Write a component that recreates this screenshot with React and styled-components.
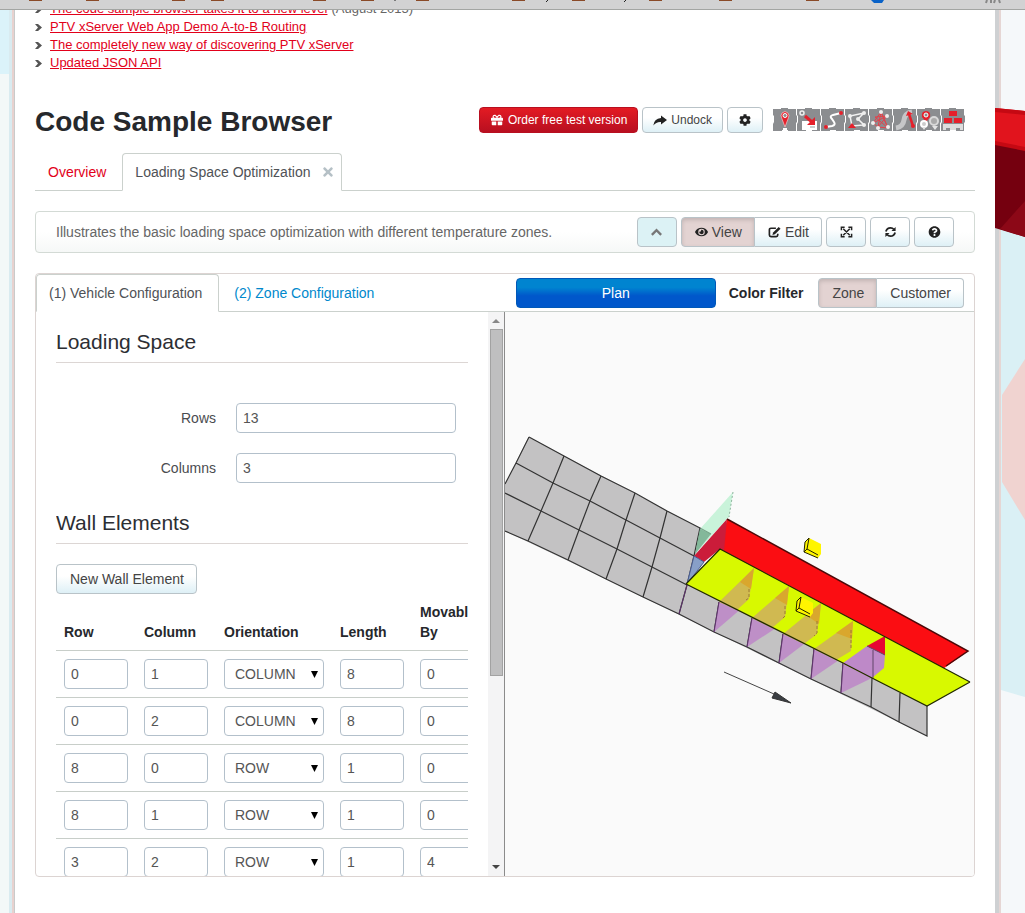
import { useState } from "react";
import styled, { createGlobalStyle, css } from "styled-components";
import { FaGift, FaCog, FaEye, FaQuestionCircle, FaTimes } from "react-icons/fa";

const news = [
  { title: "The code sample browser takes it to a new level", date: "(August 2015)" },
  { title: "PTV xServer Web App Demo A-to-B Routing" },
  { title: "The completely new way of discovering PTV xServer" },
  { title: "Updated JSON API" },
];

const walls = [
  { row: 0, column: 1, orientation: "COLUMN", length: 8, movable: 0 },
  { row: 0, column: 2, orientation: "COLUMN", length: 8, movable: 0 },
  { row: 8, column: 0, orientation: "ROW", length: 1, movable: 0 },
  { row: 8, column: 1, orientation: "ROW", length: 1, movable: 0 },
  { row: 3, column: 2, orientation: "ROW", length: 1, movable: 4 },
];

export default function App() {
  return (
    <>
      <GlobalStyle />
      <Page>
        <BookmarkBar />
        <Body>
          <LeftGutter />
          <Main>
            <News />
            <Header />
            <MainTabs />
            <Description />
            <Sample />
          </Main>
          <RightGutter />
        </Body>
      </Page>
    </>
  );
}

function BookmarkBar() {
  const folders = [29, 86, 172, 211, 313, 361, 416, 512, 572, 649, 719, 806];
  return (
    <Bar>
      <svg width="1025" height="9" aria-hidden="true">
        {folders.map((x) => (
          <rect key={x} x={x} y="0" width="13" height="1" fill="#8a4a28" />
        ))}
        <path d="M395 0v1M548 0l-2 2M626 0l-2 2" stroke="#222" />
        <path d="M871 0h13l-2 3h-8z" fill="#0a62c8" />
        <path d="M987 0l-1 3M991 0v3M995 0l-1 3M999 0l1 3" stroke="#888" strokeWidth="2" />
      </svg>
    </Bar>
  );
}

function News() {
  return (
    <NewsBox>
      <NewsList>
        {news.map((n) => (
          <li key={n.title}>
            <svg viewBox="0 0 8 9" aria-hidden="true">
              <path d="M0 1h3l4 3.5L3 8H0l3-3.5z" fill="#555" />
            </svg>
            <a href="#news">{n.title}</a> {n.date}
          </li>
        ))}
      </NewsList>
    </NewsBox>
  );
}

/* toolbar icons that sit on a 14px grid */
const shapes = {
  share: <path d="M8 1.5L14 6 8 10.500V8Q3.500 7.500.3 11.500 1 4.500 8 4z" />,
  up: <path d="M2 9l5-5 5 5" fill="none" stroke="currentColor" strokeWidth="2.6" />,
  edit: (
    <>
      <path
        d="M8.500 2H3.200Q1.500 2 1.500 3.700v5.600Q1.500 11 3.200 11h5.600q1.700 0 1.700-1.700V8"
        fill="none"
        stroke="currentColor"
        strokeWidth="1.8"
      />
      <path d="M11.500.5L13.500 2.500 7.500 8.500 4.800 9.200 5.500 6.500z" />
    </>
  ),
  full: (
    <path
      d="M1.500 4V.8h3.500M9 .8h3.500V4M12.500 8v3.200H9M5 11.200H1.500V8M3.500 2.500l7 7M10.500 2.500l-7 7"
      fill="none"
      stroke="currentColor"
      strokeWidth="1.6"
    />
  ),
  reload: (
    <>
      <path
        d="M2 5.500Q3.200 1.500 7 1.500q2.200 0 3.800 1.800M12 6.500Q10.800 10.500 7 10.500q-2.200 0-3.800-1.800"
        fill="none"
        stroke="currentColor"
        strokeWidth="1.9"
      />
      <path d="M12.500.5V5H8zM1.500 11.500V7H6z" />
    </>
  ),
};

function Icon({ name }) {
  return (
    <svg viewBox="0 0 14 12" fill="currentColor" aria-hidden="true">
      {shapes[name]}
    </svg>
  );
}

function Header() {
  return (
    <HeaderRow>
      <h1>Code Sample Browser</h1>
      <Button $small $kind="danger">
        <FaGift />
        Order free test version
      </Button>
      <Button $small>
        <Icon name="share" />
        Undock
      </Button>
      <Button $small aria-label="Settings">
        <FaCog />
      </Button>
      <ProductIcons />
    </HeaderRow>
  );
}

function ProductIcons() {
  return (
    <Products>
      <Tile label="xLocate">
        <path d="M12 19L9 11Q7 7 9 5q3-3 6 0 2 2 0 6z" fill="#e5202b" stroke="#f6c6c8" strokeWidth=".7" />
        <circle cx="12" cy="7.500" r="2" fill="#8b8d90" stroke="#fff" />
        <path d="M10 21h4" stroke="#fff" strokeWidth="2" />
      </Tile>
      <Tile label="xMap">
        <path d="M5 13h15v9H5z" fill="#fff" />
        <path d="M8 8l7 6" stroke="#e5202b" strokeWidth="3" />
        <path d="M18 9v8h-8z" fill="#e5202b" />
        <circle cx="5" cy="5" r="2" fill="none" stroke="#eee" strokeWidth="1.500" />
        <path d="M13 19h5" stroke="#999" />
      </Tile>
      <Tile label="xRoute">
        <path d="M20 5l-8 2q-4 1-1 4l2 3q2 3-2 4l-6 1" fill="none" stroke="#fff" strokeWidth="2" />
        <circle cx="20" cy="5" r="2" fill="#e5202b" />
        <circle cx="5" cy="19" r="2" fill="#e5202b" />
      </Tile>
      <Tile label="xTour">
        <path d="M19 5L5 8l2 10 12-1-6-6 6-6" fill="none" stroke="#f2f2f2" strokeWidth="1.500" />
        <circle cx="19" cy="5" r="2" fill="#eee" />
        <circle cx="5" cy="8" r="2" fill="#eee" />
        <circle cx="13" cy="11" r="2" fill="#eee" />
        <circle cx="19" cy="17" r="2" fill="#eee" />
        <path d="M3 20l4-5 4 5z" fill="#e5202b" />
      </Tile>
      <Tile label="xDima">
        <path
          d="M12 4L4 15l5 4 10 1zM12 4l7 16M6 9l13 11M18 8L4 15M12 4L9 19M18 8L9 19M6 9l12-1"
          fill="none"
          stroke="#e5404a"
        />
        <circle cx="12" cy="4" r="2" fill="#eee" />
        <circle cx="4" cy="15" r="2" fill="#eee" />
        <circle cx="9" cy="20" r="2" fill="#eee" />
        <circle cx="19" cy="19" r="2" fill="#eee" />
        <circle cx="18" cy="8" r="2" fill="#eee" />
      </Tile>
      <Tile label="xTraffic">
        <path d="M3 20q7-1 8-8t8-8" fill="none" stroke="#c5c6c8" strokeWidth="5" />
        <path d="M16 6l4 12" stroke="#e5202b" strokeWidth="2.500" />
        <path d="M13 8l2-5 5 3z" fill="#e5202b" />
        <circle cx="20" cy="18" r="2" fill="#e5202b" />
      </Tile>
      <Tile label="xCluster">
        <path d="M9 14L5 9q-1-6 4-6t4 6z" fill="#e5202b" />
        <circle cx="9" cy="7" r="2" fill="#8b8d90" stroke="#fff" />
        <circle cx="17" cy="13" r="4" fill="#aaa" stroke="#d9d9d9" strokeWidth="2" />
        <circle cx="7" cy="16" r="3" fill="#ccc" stroke="#fff" strokeWidth="2" />
        <path d="M15 18l3 4 3-4zM5 19l2 3 2-3z" fill="#e4e4e4" />
      </Tile>
      <Tile label="xLoad">
        <path d="M8 3h8v5H8zM3 10h8v5H3zM13 10h8v5h-8z" fill="#e5202b" />
        <path d="M2 16h20v6h-3v-2h-4v2H9v-2H5v2H2z" fill="#ddd" />
      </Tile>
    </Products>
  );
}

function Tile({ label, children }) {
  return (
    <svg width="24" height="24" viewBox="0 0 24 24" role="img" aria-label={label}>
      <path
        d="M0 1h8V0h7v1h8v6l1 1v6l-1 1v8h-8v-1H9v1H0v-7l1-2V8L0 7z"
        fill="#8b8d90"
      />
      {children}
    </svg>
  );
}

function MainTabs() {
  return (
    <Tabs>
      <Tab href="#overview" $color="#e2001a">
        Overview
      </Tab>
      <Tab href="#loading" $active>
        Loading Space Optimization
        <FaTimes />
      </Tab>
    </Tabs>
  );
}

function Description() {
  return (
    <Well>
      <p>Illustrates the basic loading space optimization with different temperature zones.</p>
      <Button $kind="muted" $square aria-label="Collapse">
        <Icon name="up" />
      </Button>
      <Group>
        <Button $kind="active">
          <FaEye />
          View
        </Button>
        <Button>
          <Icon name="edit" />
          Edit
        </Button>
      </Group>
      <Button $square aria-label="Full screen">
        <Icon name="full" />
      </Button>
      <Button $square aria-label="Reload">
        <Icon name="reload" />
      </Button>
      <Button $square aria-label="Help">
        <FaQuestionCircle />
      </Button>
    </Well>
  );
}

function Sample() {
  const [filter, setFilter] = useState("Zone");
  return (
    <Panel>
      <PanelBar>
        <Tab href="#vehicle" $active>
          (1) Vehicle Configuration
        </Tab>
        <Tab href="#zones" $color="#0088cc">
          (2) Zone Configuration
        </Tab>
        <Tools>
          <PlanButton>Plan</PlanButton>
          <strong>Color Filter</strong>
          <Group>
            {["Zone", "Customer"].map((f) => (
              <Button key={f} $kind={filter === f ? "active" : undefined} onClick={() => setFilter(f)}>
                {f}
              </Button>
            ))}
          </Group>
        </Tools>
      </PanelBar>
      <Split>
        <Vehicle />
        <ScrollBar>
          <Arrow $up />
          <Thumb />
          <Arrow />
        </ScrollBar>
        <Scene />
      </Split>
    </Panel>
  );
}

function Vehicle() {
  return (
    <Config>
      <Legend>Loading Space</Legend>
      <Fields>
        <Field>
          <label htmlFor="rows">Rows</label>
          <Input id="rows" defaultValue="13" />
        </Field>
        <Field>
          <label htmlFor="columns">Columns</label>
          <Input id="columns" defaultValue="3" />
        </Field>
      </Fields>
      <Legend>Wall Elements</Legend>
      <NewButton>New Wall Element</NewButton>
      <WallTable>
        <thead>
          <tr>
            <th>Row</th>
            <th>Column</th>
            <th>Orientation</th>
            <th>Length</th>
            <th>
              Movable
              <br />
              By
            </th>
          </tr>
        </thead>
        <tbody>
          {walls.map((w, i) => (
            <tr key={i}>
              <td>
                <Input $narrow aria-label="Row" defaultValue={w.row} />
              </td>
              <td>
                <Input $narrow aria-label="Column" defaultValue={w.column} />
              </td>
              <td>
                <SelectBox>
                  <select aria-label="Orientation" defaultValue={w.orientation}>
                    <option>COLUMN</option>
                    <option>ROW</option>
                  </select>
                  <svg width="7" height="7" aria-hidden="true">
                    <path d="M0 0h7L3.5 7z" />
                  </svg>
                </SelectBox>
              </td>
              <td>
                <Input $narrow aria-label="Length" defaultValue={w.length} />
              </td>
              <td>
                <Input $narrow aria-label="Movable By" defaultValue={w.movable} />
              </td>
            </tr>
          ))}
        </tbody>
      </WallTable>
    </Config>
  );
}

function Scene() {
  return (
    <Canvas viewBox="505 312 469 564" preserveAspectRatio="xMinYMin slice" aria-label="Loading space">
      {/* floor */}
      <path
        d="M529 437L711 534L694 556L687 584L927 706V736L714 632L606 579L505 531V484z"
        fill="#c3c2c3"
      />
      <g fill="none" stroke="#333" strokeWidth="1.2">
        <path d="M529 437L564 456L601 476L635 493L667 511L700 528L711 534" />
        <path d="M505 484L516 463L529 437M516 463L553 483L590 501L626 520L660 538L694 556" />
        <path d="M505 493L541 511L579 530L617 549L652 567L687 585" />
        <path d="M505 531L528 541L568 560L606 579L643 597L679 614L714 632L747 647L779 663L811 679L841 693L871 707L899 722L927 736V706" />
        <path d="M564 456L553 483L541 511L528 541M601 476L590 501L579 530L568 560" />
        <path d="M635 493L626 520L617 549L606 579M667 511L660 538L652 567L643 597" />
        <path d="M700 528L694 556L687 585L679 614M719 602L714 632M752 618L747 647M783 634L779 663" />
        <path d="M814 649L811 679M843 663L841 693M872 678L871 707M900 693L899 722" />
      </g>
      {/* rear walls */}
      <path d="M695 554L700 529L733 492L729 517L727 519z" fill="#a9efc4" fillOpacity=".6" />
      <path d="M695 554L700 529L711 534z" fill="#6fa889" fillOpacity=".7" />
      <path d="M733 492L729 517" stroke="#8db59d" strokeDasharray="2 2" />
      <path d="M727 519L968 651L943 669L720 550z" fill="#fb0d12" />
      <path d="M694 556L727 519L724 551L720 549L704 562z" fill="#cb1c3a" />
      <path d="M727 519L968 651L946 666" fill="none" stroke="#4c0808" strokeWidth="1.5" />
      <path d="M694 556L704 562L687 584z" fill="#889fc8" stroke="#4a5c91" />
      {/* movable partitions below the shelf */}
      <g fill="#be89c8" fillOpacity=".9">
        <path d="M719 602L714 632L742 608z" />
        <path d="M752 618L747 647L776 628z" />
        <path d="M783 634L779 663L808 641z" />
        <path d="M814 649L811 679L842 658z" />
        <path d="M843 663L841 693L872 678z" />
      </g>
      <path d="M686 584L720 549L970 682L927 706z" fill="#d8f900" />
      <g fill="#d0b951">
        <path d="M719 602L754 568L749 599L737 610z" />
        <path d="M752 618L789 586L785 617L772 628z" />
        <path d="M783 634L821 603L817 634L804 644z" />
        <path d="M814 649L853 621L851 651L836 660z" />
      </g>
      <g fill="#d9a72d">
        <path d="M740 582L754 568L751 589z" />
        <path d="M775 598L789 586L787 605z" />
        <path d="M806 615L821 603L819 624z" />
        <path d="M836 633L853 621L852 639z" />
      </g>
      <path d="M749 589v9l-3 2M785 606v10l-3 3M817 621v12l-3 3M851 630v20" fill="none" stroke="#9c7b35" strokeDasharray="3 2" />
      <path d="M843 663L867 646L885 655L884 668L872 678z" fill="#be89c8" />
      <path d="M867 646L885 636V655z" fill="#e70733" />
      <path d="M867 646L885 655M873 650V678" fill="none" stroke="#604469" />
      <path d="M686 584L720 549L970 682M686 584L843 663L872 678L927 706L970 682" fill="none" stroke="#202800" strokeWidth="1.2" />
      <path d="M687 585L679 614M719 602L714 632M752 618L747 647M783 634L779 663M814 649L811 679M843 663L841 693" fill="none" stroke="#60336e" />
      {/* axles */}
      <Crate x={804} y={538} />
      <Crate x={796} y={597} />
      <path d="M724 672L774 694" stroke="#444" />
      <path d="M772 698L775 692L791 703z" fill="#3a3d42" stroke="#333" />
    </Canvas>
  );
}

function Crate({ x, y }) {
  return (
    <g transform={`translate(${x} ${y})`} strokeLinejoin="round">
      <path d="M5 0L17 6V16L14 20L0 14L1 4z" fill="#fff500" />
      <path d="M5 0L3 11L14 17M1 4L0 14L14 20M5 0L1 4M3 11L0 14" fill="none" stroke="#222100" />
    </g>
  );
}

function RightGutter() {
  return (
    <Gutter $right>
      <svg viewBox="0 0 30 903" width="30" height="903" aria-hidden="true">
        <path d="M0 0h30v903H0z" fill="#f5f8fa" />
        <path d="M0 218l30 9v460l-24-7H0z" fill="#daf0f5" />
        <path d="M30 349L7 385v87l23 38z" fill="#f0d3d0" />
        <path d="M0 0h4v903H0z" fill="#cfd1d3" />
        <path d="M4 0h2v903H4z" fill="#e5d6d4" />
        <path d="M0 98l30 3v40L0 135z" fill="#e1141d" />
        <path d="M0 98l30 3v4L0 102zM0 131l30 6v5L0 136z" fill="#c50913" />
        <path d="M0 135l30 6v86l-30-9z" fill="#75000f" />
        <path d="M5 219l25-28v36z" fill="#8c0817" />
      </svg>
    </Gutter>
  );
}

function LeftGutter() {
  return <Gutter />;
}

const GlobalStyle = createGlobalStyle`
  * {
    box-sizing: border-box;
  }
  body {
    margin: 0;
    background: #fff;
    color: #4a4c50;
    font: 14px/20px "Liberation Sans", Arial, sans-serif;
  }
  input, select, button {
    font: inherit;
    color: inherit;
  }
`;

const Page = styled.div`
  height: 100vh;
  min-height: 600px;
  display: flex;
  flex-direction: column;
  overflow: hidden;
`;

const Bar = styled.div`
  flex: none;
  height: 10px;
  overflow: hidden;
  background: #d2d2d3;
  border-bottom: 1px solid #a3a5a3;
  svg {
    display: block;
  }
`;

const Body = styled.div`
  flex: 1;
  min-height: 0;
  display: flex;
`;

const Gutter = styled.div`
  flex: none;
  overflow: hidden;
  width: ${(props) => (props.$right ? 30 : 15)}px;
  background: ${(props) =>
    props.$right
      ? "#f5f8fa"
      : "linear-gradient(90deg, transparent 9px, #d9ebf0 9px 12px, #e8d2cf 12px 14px, #c9cbcb 14px), linear-gradient(#dbf3fa 64px, #f3f8f8 64px)"};
  svg {
    display: block;
  }
`;

const Main = styled.main`
  flex: 1;
  min-width: 0;
  display: flex;
  flex-direction: column;
  padding: 0 20px 36px;
`;

const NewsBox = styled.div`
  flex: none;
  overflow: hidden;
`;

const NewsList = styled.ul`
  list-style: none;
  margin: -10px 0 0;
  padding: 0;
  font-size: 13px;
  line-height: 18px;
  color: #666;
  li {
    display: flex;
    align-items: center;
    gap: 4px;
  }
  svg {
    width: 8px;
    height: 9px;
    margin-right: 3px;
  }
  a {
    color: #e2001a;
  }
`;

const HeaderRow = styled.header`
  flex: none;
  display: flex;
  align-items: center;
  gap: 4px;
  margin-top: 28px;
  padding-right: 10px;
  h1 {
    flex: 1;
    margin: 0;
    padding-top: 4px;
    font-size: 28px;
    line-height: 36px;
    color: #26282c;
  }
`;

const Products = styled.div`
  display: flex;
  margin-left: 6px;
`;

const kinds = {
  normal: css`
    background: linear-gradient(#fff 40%, #def0f6);
    color: #444;
  `,
  active: css`
    background: #e3d3d2;
    box-shadow: inset 0 2px 4px rgba(0, 0, 0, 0.15);
    color: #444;
  `,
  muted: css`
    background: #dcf2f5;
    color: #777;
  `,
  danger: css`
    background: linear-gradient(#e31b23, #b80f20);
    border-color: #b80f20;
    color: #fff;
  `,
};

const Button = styled.button`
  display: inline-flex;
  align-items: center;
  justify-content: center;
  gap: 4px;
  height: ${(props) => (props.$small ? 26 : 30)}px;
  width: ${(props) => (props.$square ? "40px" : "auto")};
  padding: ${(props) => (props.$square ? "0" : props.$small ? "0 10px" : "0 12px 0 13px")};
  border: 1px solid #b9c3c8;
  border-radius: 4px;
  font-size: ${(props) => (props.$small ? 12 : 14)}px;
  white-space: nowrap;
  ${(props) => kinds[props.$kind || "normal"]}
  svg {
    width: ${(props) => (props.$small ? 14 : 13)}px;
    height: 12px;
    color: ${(props) => (props.$kind === "danger" ? "#fff" : props.$kind === "muted" ? "#777" : "#222")};
  }
`;

const Group = styled.div`
  display: flex;
  ${Button}:first-child {
    border-radius: 4px 0 0 4px;
  }
  ${Button}:last-child {
    border-left: 0;
    border-radius: 0 4px 4px 0;
  }
`;

const Tabs = styled.nav`
  flex: none;
  display: flex;
  margin-top: 13px;
  border-bottom: 1px solid #cbd1cd;
`;

const Tab = styled.a`
  display: flex;
  align-items: center;
  height: 38px;
  margin-bottom: -1px;
  padding: 0 ${(props) => (props.$active ? 12 : 15)}px 0 12px;
  border: 1px solid transparent;
  border-radius: 4px 4px 0 0;
  color: ${(props) => props.$color};
  text-decoration: none;
  white-space: nowrap;
  ${(props) =>
    props.$active &&
    css`
      background: #fff;
      border-color: #cbd1cd #cbd1cd #fff;
      color: #4f5256;
    `}
  svg {
    width: 10px;
    margin: 0 -4px 0 13px;
    color: #b5c0c6;
  }
`;

const Well = styled.section`
  flex: none;
  display: flex;
  align-items: center;
  gap: 4px;
  height: 42px;
  margin: 20px 0;
  padding: 0 20px;
  border: 1px solid #d3dad5;
  border-radius: 4px;
  background: linear-gradient(#fff 50%, #f6f8f7);
  color: #666;
  p {
    flex: 1;
    margin: 0;
  }
`;

const Panel = styled.section`
  flex: 1;
  min-height: 0;
  display: flex;
  flex-direction: column;
  border: 1px solid #dcd4d2;
  border-radius: 4px;
  overflow: hidden;
`;

const PanelBar = styled.div`
  flex: none;
  display: flex;
  border-bottom: 1px solid #cbd1cd;
  ${Tab}:first-child {
    padding-right: 16px;
  }
  ${Tab}:nth-child(2) {
    margin-left: 2px;
  }
`;

const Tools = styled.div`
  display: flex;
  align-items: center;
  margin-left: auto;
  padding-right: 10px;
  strong {
    margin: 0 15px 0 13px;
    color: #26282c;
  }
`;

const PlanButton = styled.button`
  width: 200px;
  height: 30px;
  border: 1px solid #0058b8;
  border-radius: 4px;
  background: linear-gradient(#0084d0 30%, #0057cb 60%);
  color: #fff;
`;

const Split = styled.div`
  flex: 1;
  min-height: 0;
  display: flex;
`;

const Config = styled.form`
  flex: none;
  width: 412px;
  margin: 0 20px;
  padding-top: 10px;
  overflow: hidden;
`;

const Legend = styled.h2`
  margin: 0 0 20px;
  border-bottom: 1px solid #dcd6d4;
  font-size: 21px;
  font-weight: 400;
  line-height: 40px;
  color: #2c2e33;
`;

const Fields = styled.div`
  padding: 20px 0 0;
`;

const Field = styled.div`
  display: flex;
  align-items: center;
  gap: 20px;
  margin-bottom: 20px;
  label {
    width: 160px;
    text-align: right;
  }
`;

const Input = styled.input`
  display: block;
  width: ${(props) => (props.$narrow ? 64 : 220)}px;
  height: 30px;
  padding: 4px 6px;
  border: 1px solid #b3c0cb;
  border-radius: 4px;
  background: #fff;
  color: #555;
`;

const NewButton = styled(Button).attrs({ type: "button" })`
  display: flex;
`;

const WallTable = styled.table`
  border-collapse: collapse;
  th {
    padding: 8px;
    text-align: left;
    vertical-align: bottom;
    color: #26282c;
  }
  td {
    padding: 8px;
    border-top: 1px solid #c8cec9;
  }
`;

const SelectBox = styled.div`
  display: grid;
  align-items: center;
  width: 100px;
  select,
  svg {
    grid-area: 1 / 1;
  }
  select {
    appearance: none;
    width: 100%;
    height: 30px;
    padding: 0 10px;
    border: 1px solid #b3c0cb;
    border-radius: 4px;
    background: #fff;
    color: #555;
  }
  svg {
    justify-self: end;
    margin-right: 6px;
    pointer-events: none;
  }
`;

const ScrollBar = styled.div`
  flex: none;
  display: flex;
  flex-direction: column;
  align-items: center;
  width: 17px;
  background: #f4f4f5;
  border-right: 1px solid #8b8b8b;
`;

const Arrow = styled.div`
  margin: ${(props) => (props.$up ? "7px 0 6px" : "auto 0 7px")};
  border: 4px solid transparent;
  border-top-width: ${(props) => (props.$up ? 0 : 4)}px;
  border-bottom-width: ${(props) => (props.$up ? 4 : 0)}px;
  border-top-color: #444;
  border-bottom-color: #888;
`;

const Thumb = styled.div`
  width: 13px;
  height: 347px;
  border: 1px solid #a2a2a2;
  background: #bfbfc0;
`;

const Canvas = styled.svg`
  flex: 1;
  min-width: 0;
  height: 100%;
  background: #fafafa;
`;
